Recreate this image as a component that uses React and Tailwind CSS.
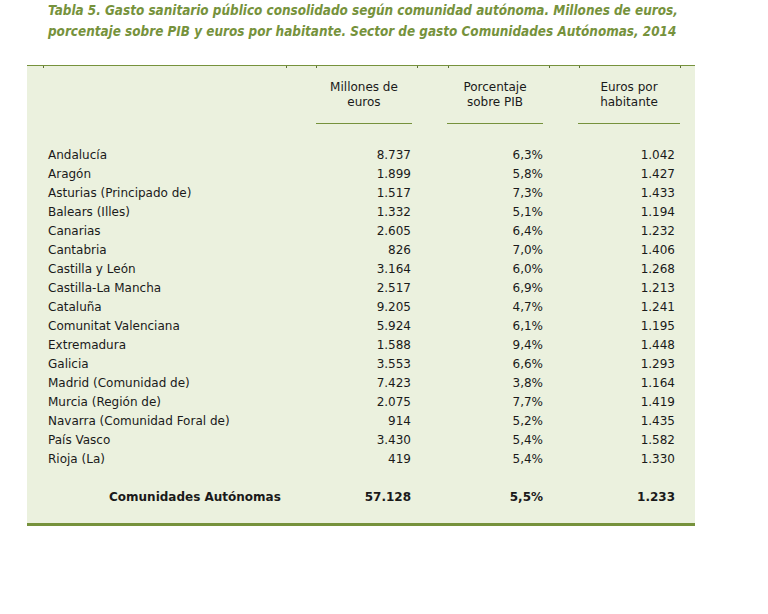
import React from "react";

const rows = [
    ["Andalucía", "8.737", "6,3%", "1.042"],
    ["Aragón", "1.899", "5,8%", "1.427"],
    ["Asturias (Principado de)", "1.517", "7,3%", "1.433"],
    ["Balears (Illes)", "1.332", "5,1%", "1.194"],
    ["Canarias", "2.605", "6,4%", "1.232"],
    ["Cantabria", "826", "7,0%", "1.406"],
    ["Castilla y León", "3.164", "6,0%", "1.268"],
    ["Castilla-La Mancha", "2.517", "6,9%", "1.213"],
    ["Cataluña", "9.205", "4,7%", "1.241"],
    ["Comunitat Valenciana", "5.924", "6,1%", "1.195"],
    ["Extremadura", "1.588", "9,4%", "1.448"],
    ["Galicia", "3.553", "6,6%", "1.293"],
    ["Madrid (Comunidad de)", "7.423", "3,8%", "1.164"],
    ["Murcia (Región de)", "2.075", "7,7%", "1.419"],
    ["Navarra (Comunidad Foral de)", "914", "5,2%", "1.435"],
    ["País Vasco", "3.430", "5,4%", "1.582"],
    ["Rioja (La)", "419", "5,4%", "1.330"],
];

const ticks = ["left-[16px]", "left-[259px]", "left-[289px]", "left-[390px]", "left-[421px]", "left-[522px]", "left-[552px]", "left-[653px]"];

function App() {
    return (
        <div className="w-[768px] h-[614px] bg-white font-['DejaVu_Sans',Verdana,sans-serif] text-[12px] text-[#1a1a1a]">
            {/* Title */}
            <p className="pl-[48px] font-['DejaVu_Sans_Condensed','DejaVu_Sans',sans-serif] [font-stretch:condensed] font-bold italic text-[13.4px] leading-[21px] text-[#76923c]">
                Tabla 5. Gasto sanitario público consolidado según comunidad autónoma. Millones de euros,
                <br />
                porcentaje sobre PIB y euros por habitante. Sector de gasto Comunidades Autónomas, 2014
            </p>

            {/* Table */}
            <div className="relative ml-[27px] mt-[23px] w-[668px] bg-[#ebf1de] border-t border-[#76923c] border-b-[3px] border-b-[#76923c] pb-[16px]">
                {ticks.map((t) => (
                    <span key={t} className={`absolute top-0 ${t} w-px h-[2px] bg-[#5c6f33]`}></span>
                ))}

                {/* Header */}
                <div className="flex pt-[14px] leading-[15px] text-center">
                    <div className="w-[289px]"></div>
                    <div className="w-[96px] pb-[13px] border-b border-[#76923c]">Millones de<br />euros</div>
                    <div className="w-[35px]"></div>
                    <div className="w-[96px] pb-[13px] border-b border-[#76923c]">Porcentaje<br />sobre PIB</div>
                    <div className="w-[35px]"></div>
                    <div className="w-[102px] pb-[13px] border-b border-[#76923c]">Euros por<br />habitante</div>
                </div>

                {/* Rows */}
                <div className="mt-[21px]">
                    {rows.map((r) => (
                        <div key={r[0]} className="flex h-[19.06px] items-center">
                            <div className="w-[289px] pl-[21px]">{r[0]}</div>
                            <div className="w-[95px] text-right">{r[1]}</div>
                            <div className="w-[36px]"></div>
                            <div className="w-[96px] text-right">{r[2]}</div>
                            <div className="w-[35px]"></div>
                            <div className="w-[97px] text-right">{r[3]}</div>
                        </div>
                    ))}
                </div>

                {/* Total */}
                <div className="flex h-[19px] items-center mt-[19px] font-bold">
                    <div className="w-[289px] pl-[82px]">Comunidades Autónomas</div>
                    <div className="w-[95px] text-right">57.128</div>
                    <div className="w-[36px]"></div>
                    <div className="w-[96px] text-right">5,5%</div>
                    <div className="w-[35px]"></div>
                    <div className="w-[97px] text-right">1.233</div>
                </div>
            </div>
        </div>
    );
}

export default App;
